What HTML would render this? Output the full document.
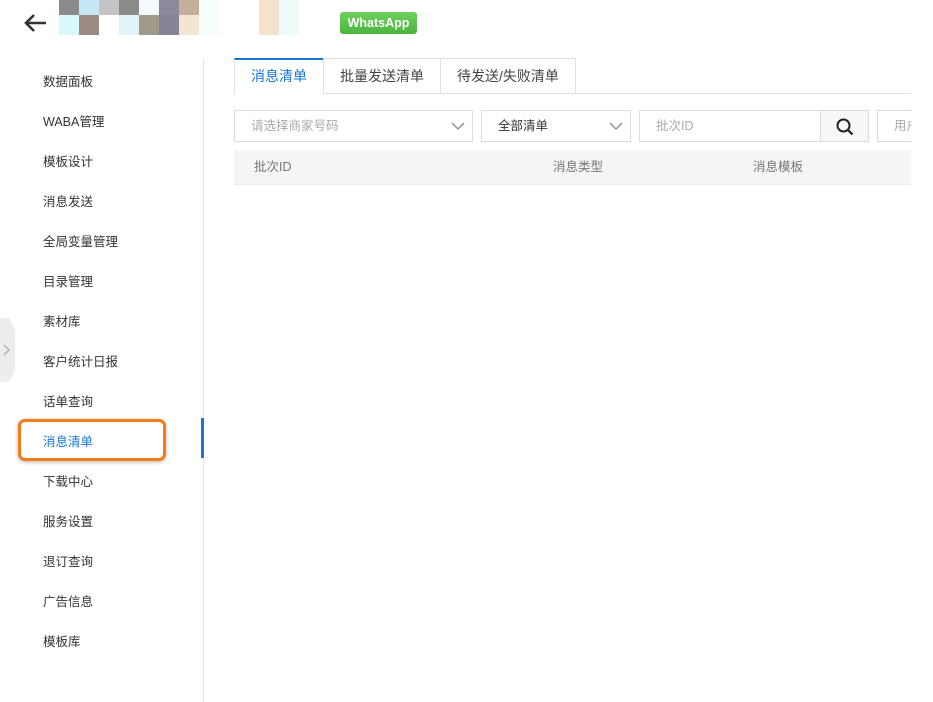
<!DOCTYPE html>
<html><head><meta charset="utf-8"><style>
*{margin:0;padding:0;box-sizing:border-box}
body{width:933px;height:702px;background:#fff;position:relative;overflow:hidden;font-family:"Liberation Sans","Noto Sans CJK SC",sans-serif;font-size:13px;color:#333}
.a{position:absolute}
.m{position:absolute;width:20px}
.nav{position:absolute;left:43px;font-size:12.5px;color:#333;line-height:16px}
.box{position:absolute;border:1px solid #dcdcdc;background:#fff;height:32px;top:110px;overflow:hidden}
.ph{position:absolute;top:7px;font-size:12.5px;color:#aaa;white-space:nowrap;line-height:16px}
.chev{position:absolute;top:8px}
.th{position:absolute;top:159px;font-size:12.5px;color:#777;line-height:16px}
</style></head><body>
<svg class="a" style="left:22px;top:12px" width="26" height="22" viewBox="0 0 26 22"><path d="M24 11H4M12 3L4 11l8 8" stroke="#333" stroke-width="2.6" fill="none"/></svg>
<div class="m" style="left:59px;top:0;height:15px;background:#8a8a8a"></div>
<div class="m" style="left:79px;top:0;height:15px;background:#c5e6f5"></div>
<div class="m" style="left:99px;top:0;height:15px;background:#c4c4c4"></div>
<div class="m" style="left:119px;top:0;height:15px;background:#8a8a8a"></div>
<div class="m" style="left:139px;top:0;height:15px;background:#f2fcfc"></div>
<div class="m" style="left:159px;top:0;height:15px;background:#8c8a9a"></div>
<div class="m" style="left:179px;top:0;height:15px;background:#c2b09a"></div>
<div class="m" style="left:199px;top:0;height:35px;background:#f7fdfd"></div>
<div class="m" style="left:59px;top:15px;height:20px;background:#d8f8fb"></div>
<div class="m" style="left:79px;top:15px;height:20px;background:#9c8a80"></div>
<div class="m" style="left:119px;top:15px;height:20px;background:#e2f4fa"></div>
<div class="m" style="left:139px;top:15px;height:20px;background:#a09a8a"></div>
<div class="m" style="left:159px;top:15px;height:20px;background:#858497"></div>
<div class="m" style="left:179px;top:15px;height:20px;background:#f5e4d2"></div>
<div class="m" style="left:259px;top:0;height:35px;background:#f5e2cc"></div>
<div class="m" style="left:279px;top:0;height:35px;background:#f0fbfb"></div>
<div class="a" style="left:340px;top:12px;width:77px;height:22px;background:linear-gradient(#6fd05e,#4cb43e);border-radius:3px;color:#fff;font-weight:bold;font-size:12.5px;text-align:center;line-height:22px">WhatsApp</div>

<div class="a" style="left:203px;top:58px;width:1px;height:644px;background:#e6e6e6"></div>
<div class="a" style="left:201px;top:418px;width:3px;height:40px;background:#1677d2"></div>
<div class="a" style="left:0;top:318px;width:15px;height:64px;background:#ededed;clip-path:polygon(0 0,60% 0,100% 18%,100% 82%,60% 100%,0 100%)"></div>
<svg class="a" style="left:3px;top:344px" width="8" height="12"><path d="M1 1l5 5-5 5" stroke="#aaa" stroke-width="1.3" fill="none"/></svg>

<div class="nav" style="top:74px">数据面板</div>
<div class="nav" style="top:114px">WABA管理</div>
<div class="nav" style="top:154px">模板设计</div>
<div class="nav" style="top:194px">消息发送</div>
<div class="nav" style="top:234px">全局变量管理</div>
<div class="nav" style="top:274px">目录管理</div>
<div class="nav" style="top:314px">素材库</div>
<div class="nav" style="top:354px">客户统计日报</div>
<div class="nav" style="top:394px">话单查询</div>
<div class="nav" style="top:434px;color:#1677d2">消息清单</div>
<div class="nav" style="top:474px">下载中心</div>
<div class="nav" style="top:514px">服务设置</div>
<div class="nav" style="top:554px">退订查询</div>
<div class="nav" style="top:594px">广告信息</div>
<div class="nav" style="top:634px">模板库</div>
<div class="a" style="left:18px;top:419px;width:148px;height:42px;border:3px solid #f47a1c;border-radius:7px;box-shadow:0 1px 4px rgba(0,0,0,.3)"></div>

<div class="a" style="left:234px;top:93px;width:677px;height:1px;background:#e0e0e0"></div>
<div class="a" style="left:234px;top:58px;width:90px;height:36px;background:#fff;border-top:2px solid #1677d2;border-right:1px solid #e0e0e0;border-left:1px solid #e0e0e0;color:#1677d2;font-size:14px;text-align:center;line-height:33px">消息清单</div>
<div class="a" style="left:323px;top:58px;width:118px;height:35px;border:1px solid #e0e0e0;border-bottom:none;font-size:14px;text-align:center;line-height:35px;color:#444">批量发送清单</div>
<div class="a" style="left:440px;top:58px;width:136px;height:35px;border:1px solid #e0e0e0;border-bottom:none;font-size:14px;text-align:center;line-height:35px;color:#444">待发送/失败清单</div>

<div class="box" style="left:234px;width:239px"><span class="ph" style="left:16px">请选择商家号码</span><svg class="chev" style="left:216px" width="14" height="14"><path d="M1 4l6 6 6-6" stroke="#888" stroke-width="1.3" fill="none"/></svg></div>
<div class="box" style="left:481px;width:150px"><span class="ph" style="left:16px;color:#333">全部清单</span><svg class="chev" style="left:127px" width="14" height="14"><path d="M1 4l6 6 6-6" stroke="#888" stroke-width="1.3" fill="none"/></svg></div>
<div class="box" style="left:639px;width:230px"><span class="ph" style="left:16px">批次ID</span><div class="a" style="left:180px;top:0;width:49px;height:30px;border-left:1px solid #dcdcdc;background:#f7f7f7"></div><svg class="a" style="left:196px;top:7px" width="18" height="18"><circle cx="7.5" cy="7.5" r="6" stroke="#222" stroke-width="2" fill="none"/><path d="M12 12l4.5 4.5" stroke="#222" stroke-width="2.2"/></svg></div>
<div class="box" style="left:877px;width:60px"><span class="ph" style="left:16px">用户</span></div>
<div class="a" style="left:911px;top:100px;width:22px;height:100px;background:#fff"></div>

<div class="a" style="left:234px;top:150px;width:677px;height:35px;background:#f5f5f5;border-bottom:1px solid #ebebeb"></div>
<div class="th" style="left:254px">批次ID</div>
<div class="th" style="left:553px">消息类型</div>
<div class="th" style="left:753px">消息模板</div>
</body></html>
